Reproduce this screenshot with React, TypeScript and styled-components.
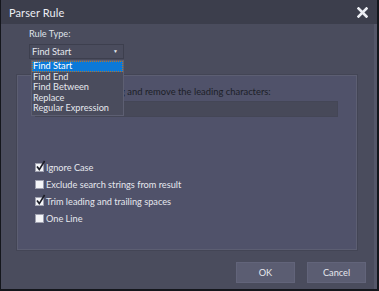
import styled, { createGlobalStyle } from "styled-components";

const GlobalStyle = createGlobalStyle`
    html, body {
        margin: 0;
        padding: 0;
        background: #1a1c22;
    }
    body {
        font-family: Lato, "Open Sans", sans-serif;
    }
`;

const ruleTypes = ["Find Start", "Find End", "Find Between", "Replace", "Regular Expression"];

const options = [
    { label: "Ignore Case", checked: true },
    { label: "Exclude search strings from result", checked: false },
    { label: "Trim leading and trailing spaces", checked: true },
    { label: "One Line", checked: false },
];

export default function App() {
    return (
        <>
            <GlobalStyle />
            <WindowStyled>
                <TitleBarStyled>
                    <TitleStyled>Parser Rule</TitleStyled>
                    <CloseStyled aria-label="close">
                        <svg width="11" height="11" viewBox="0 0 11 11">
                            <path d="M1.5 1.5 L9.5 9.5 M9.5 1.5 L1.5 9.5" stroke="#eceef4" strokeWidth="2.6" strokeLinecap="square" />
                        </svg>
                    </CloseStyled>
                </TitleBarStyled>
                <BodyStyled>
                    <RuleTypeStyled>
                        <LabelStyled>Rule Type:</LabelStyled>
                        <SelectStyled>
                            <span>Find Start</span>
                            <ArrowStyled>▼</ArrowStyled>
                        </SelectStyled>
                        <ListStyled>
                            {ruleTypes.map((type, i) => (
                                <ListItemStyled key={type} $active={i === 0}>
                                    {type}
                                </ListItemStyled>
                            ))}
                        </ListStyled>
                    </RuleTypeStyled>
                    <PanelStyled>
                        <DescriptionStyled>
                            Locate the start string and remove the leading characters:
                        </DescriptionStyled>
                        <InputStyled />
                        <OptionsStyled>
                            {options.map((opt) => (
                                <OptionRowStyled key={opt.label}>
                                    <CheckBoxStyled>
                                        {opt.checked && (
                                            <svg width="11" height="12" viewBox="0 0 11 12">
                                                <path d="M2 6.5 L4.3 9.6 L9.6 1" stroke="#1c1e28" strokeWidth="1.7" fill="none" />
                                            </svg>
                                        )}
                                    </CheckBoxStyled>
                                    <span>{opt.label}</span>
                                </OptionRowStyled>
                            ))}
                        </OptionsStyled>
                    </PanelStyled>
                    <FooterStyled>
                        <ButtonStyled>OK</ButtonStyled>
                        <ButtonStyled>Cancel</ButtonStyled>
                    </FooterStyled>
                </BodyStyled>
            </WindowStyled>
        </>
    );
}

const WindowStyled = styled.div`
    width: 379px;
    height: 291px;
    box-sizing: border-box;
    border-left: 1px solid #14161c;
    border-right: 2px solid #14161c;
    border-bottom: 2px solid #14161c;
    background: #4a4c5d;
    display: flex;
    flex-direction: column;
    overflow: hidden;
`;

const TitleBarStyled = styled.div`
    height: 24px;
    flex: none;
    display: flex;
    align-items: center;
    justify-content: space-between;
    padding: 0 9px 0 8px;
    background: #3c3e4c;
`;

const TitleStyled = styled.div`
    color: #eceef4;
    font-size: 11px;
    letter-spacing: 0.1px;
`;

const CloseStyled = styled.div`
    width: 11px;
    height: 11px;
    display: flex;
`;

const BodyStyled = styled.div`
    flex: 1;
    display: flex;
    flex-direction: column;
    padding: 0 20px 0 16px;
    border-right: 3px solid #555769;
    color: #e6e8ee;
    font-size: 9.2px;
`;

const RuleTypeStyled = styled.div`
    position: relative;
    padding: 3px 0 0 12px;
    display: flex;
    flex-direction: column;
    align-items: flex-start;
    gap: 4px;
    z-index: 2;
`;

const LabelStyled = styled.div`
    line-height: 13px;
    color: #dfe1e8;
`;

const SelectStyled = styled.div`
    width: 95px;
    height: 15px;
    box-sizing: border-box;
    border: 1px solid #3d3f4e;
    background: #4a4c5d;
    display: flex;
    align-items: center;
    justify-content: space-between;
    padding: 0 5px 0 2px;
    line-height: 13px;
`;

const ArrowStyled = styled.span`
    font-size: 5px;
    color: #e6e8ee;
`;

const ListStyled = styled.div`
    position: absolute;
    top: 36px;
    left: 14px;
    width: 93px;
    box-sizing: border-box;
    background: #4a4c5d;
    border: 1px solid #5d5f72;
    padding: 0 0 1px 0;
`;

const ListItemStyled = styled.div<{ $active: boolean }>`
    height: 10.5px;
    line-height: 10.5px;
    padding-left: 1px;
    white-space: nowrap;
    color: ${(p) => (p.$active ? "#ffffff" : "#e6e8ee")};
    background: ${(p) => (p.$active ? "#0b79d8" : "transparent")};
    outline: ${(p) => (p.$active ? "1px dotted #b8742a" : "none")};
    outline-offset: -1px;
`;

const PanelStyled = styled.div`
    margin-top: 16px;
    width: 340px;
    height: 175px;
    box-sizing: border-box;
    background: #50526a;
    border: 1px solid #5c5e72;
    box-shadow: 0 0 0 1px #434555;
    padding: 9px 18px 0 17px;
    display: flex;
    flex-direction: column;
`;

const DescriptionStyled = styled.div`
    line-height: 13px;
    font-size: 9.4px;
    white-space: nowrap;
    color: #1d1f28;
`;

const InputStyled = styled.div`
    margin-top: 3px;
    height: 16px;
    box-sizing: border-box;
    background: #474959;
    border: 1px solid #444656;
`;

const OptionsStyled = styled.div`
    margin-top: 44px;
    display: flex;
    flex-direction: column;
    gap: 4.7px;
`;

const OptionRowStyled = styled.div`
    display: flex;
    align-items: center;
    gap: 2px;
    height: 12.5px;
    color: #e6e8ee;
`;

const CheckBoxStyled = styled.div`
    width: 9px;
    height: 9px;
    background: #f4f5f8;
    border: 1px solid #9fa1b0;
    box-sizing: border-box;
    position: relative;
    svg {
        position: absolute;
        left: -1px;
        top: -4px;
    }
`;

const FooterStyled = styled.div`
    display: flex;
    justify-content: flex-end;
    gap: 12px;
    margin-top: 12px;
    margin-right: -12px;
`;

const ButtonStyled = styled.div`
    width: 59px;
    height: 21px;
    box-sizing: border-box;
    background: #5b5d72;
    border: 1px solid #62647a;
    color: #e6e8ee;
    display: flex;
    align-items: center;
    justify-content: center;
    font-size: 9.2px;
`;
